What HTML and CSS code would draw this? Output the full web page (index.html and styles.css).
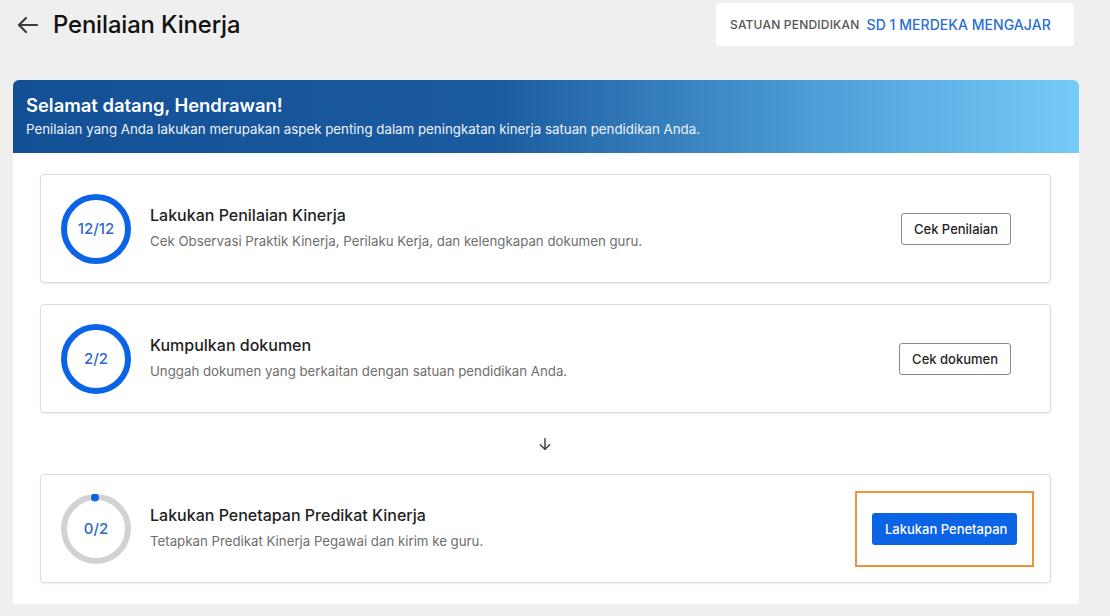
FILE: index.html
```html
<!DOCTYPE html>
<html lang="id">
<head>
  <meta charset="UTF-8">
  <meta name="viewport" content="width=device-width, initial-scale=1.0">
  <title>Penilaian Kinerja</title>
  <link rel="stylesheet" href="styles.css">
</head>
<body>
  <header class="topbar">
    <div class="page-title">
      <svg class="back-icon" width="24" height="24" viewBox="0 0 24 24" fill="none" stroke="#3c3c3c" stroke-width="2.2" stroke-linecap="round" stroke-linejoin="round">
        <path d="M21 12H3"/>
        <path d="M10 5l-7 7 7 7"/>
      </svg>
      <h1>Penilaian Kinerja</h1>
    </div>
    <div class="school-box">
      <span class="school-label">SATUAN PENDIDIKAN</span>
      <span class="school-name">SD 1 MERDEKA MENGAJAR</span>
    </div>
  </header>

  <main class="panel">
    <div class="banner">
      <h2>Selamat datang, Hendrawan!</h2>
      <p>Penilaian yang Anda lakukan merupakan aspek penting dalam peningkatan kinerja satuan pendidikan Anda.</p>
    </div>

    <div class="steps">
      <div class="step-card">
        <div class="progress">
          <svg width="70" height="70" viewBox="0 0 70 70">
            <circle cx="35" cy="35" r="32" fill="none" stroke="#0b63e5" stroke-width="6"/>
          </svg>
          <span class="progress-text">12/12</span>
        </div>
        <div class="step-info">
          <h3>Lakukan Penilaian Kinerja</h3>
          <p>Cek Observasi Praktik Kinerja, Perilaku Kerja, dan kelengkapan dokumen guru.</p>
        </div>
        <button class="btn btn-outline">Cek Penilaian</button>
      </div>

      <div class="step-card">
        <div class="progress">
          <svg width="70" height="70" viewBox="0 0 70 70">
            <circle cx="35" cy="35" r="32" fill="none" stroke="#0b63e5" stroke-width="6"/>
          </svg>
          <span class="progress-text">2/2</span>
        </div>
        <div class="step-info">
          <h3>Kumpulkan dokumen</h3>
          <p>Unggah dokumen yang berkaitan dengan satuan pendidikan Anda.</p>
        </div>
        <button class="btn btn-outline">Cek dokumen</button>
      </div>

      <div class="step-arrow">
        <svg width="16" height="16" viewBox="0 0 24 24" fill="none" stroke="#3c3c3c" stroke-width="2.2" stroke-linecap="round" stroke-linejoin="round">
          <path d="M12 4v16"/>
          <path d="M5 13l7 7 7-7"/>
        </svg>
      </div>

      <div class="step-card step-card-last">
        <div class="progress">
          <svg width="70" height="70" viewBox="0 0 70 70">
            <circle cx="35" cy="35" r="32" fill="none" stroke="#d2d2d2" stroke-width="6"/>
            <circle cx="34" cy="3.5" r="4" fill="#0b63e5"/>
          </svg>
          <span class="progress-text">0/2</span>
        </div>
        <div class="step-info">
          <h3>Lakukan Penetapan Predikat Kinerja</h3>
          <p>Tetapkan Predikat Kinerja Pegawai dan kirim ke guru.</p>
        </div>
        <div class="highlight">
          <button class="btn btn-primary">Lakukan Penetapan</button>
        </div>
      </div>
    </div>
  </main>
</body>
</html>
```

FILE: styles.css
```css
body {
  font-family: Inter, "Noto Sans", sans-serif;
  margin: 0;
  padding: 0;
  background-color: #efefef;
  color: #1f1f1f;
}
.topbar {
  display: flex;
  justify-content: space-between;
  align-items: flex-start;
  height: 80px;
  padding: 3px 36px 0 16px;
  box-sizing: border-box;
}
.page-title {
  display: flex;
  align-items: center;
  gap: 13px;
  height: 43px;
}
.back-icon {
  display: block;
}
h1 {
  margin: 0;
  font-size: 23.8px;
  font-weight: 500;
  color: #111;
  letter-spacing: -0.1px;
}
.school-box {
  display: flex;
  align-items: center;
  gap: 7px;
  height: 43px;
  padding: 0 21px 0 14px;
  background-color: white;
  border-radius: 4px;
  width: 358px;
  box-sizing: border-box;
}
.school-label {
  font-size: 12px;
  font-weight: 500;
  color: #555;
  letter-spacing: 0.2px;
}
.school-name {
  font-size: 14px;
  font-weight: 500;
  color: #2a6fd4;
  letter-spacing: 0.05px;
}
.panel {
  margin-left: 13px;
  width: 1066px;
  background-color: white;
  border-radius: 6px 6px 0 0;
}
.banner {
  height: 73px;
  box-sizing: border-box;
  padding: 14px 13px 0;
  border-radius: 6px 6px 0 0;
  background: linear-gradient(90deg, #134f95 0%, #1b5b9f 45%, #4d9dd6 75%, #76cbf9 100%);
  color: white;
}
.banner h2 {
  margin: 0;
  font-size: 18.4px;
  font-weight: 600;
  line-height: 22px;
}
.banner p {
  margin: 4px 0 0;
  font-size: 13.3px;
  line-height: 18px;
  color: #eef4fb;
}
.steps {
  padding: 21px 28px 21px 27px;
  display: flex;
  flex-direction: column;
  gap: 21px;
}
.step-card {
  display: flex;
  align-items: center;
  height: 109px;
  box-sizing: border-box;
  padding: 0 39px 0 20px;
  border: 1px solid #dcdcdc;
  border-radius: 4px;
  box-shadow: 0 1px 2px rgba(0, 0, 0, 0.08);
}
.step-card-last {
  padding-right: 16px;
}
.progress {
  position: relative;
  width: 70px;
  height: 70px;
  flex-shrink: 0;
}
.progress svg {
  display: block;
}
.progress-text {
  position: absolute;
  inset: 0;
  display: flex;
  align-items: center;
  justify-content: center;
  font-size: 15px;
  font-weight: 500;
  color: #2d69c9;
}
.step-info {
  flex: 1;
  margin-left: 19px;
}
.step-info h3 {
  margin: 0;
  font-size: 16px;
  font-weight: 500;
  line-height: 20px;
  color: #1f1f1f;
  margin-top: -2px;
}
.step-info p {
  margin: 7px 0 0;
  font-size: 13.25px;
  line-height: 18px;
  color: #6e6e6e;
}
.btn {
  font-family: inherit;
  font-size: 13px;
  font-weight: 500;
  height: 32px;
  border-radius: 3px;
  cursor: pointer;
  white-space: nowrap;
}
.btn-outline {
  background-color: white;
  border: 1px solid #8a8a8a;
  color: #1f1f1f;
  padding: 0 12px;
}
.btn-primary {
  background-color: #0b63e5;
  border: none;
  color: white;
  padding: 0 13px;
  width: 145px;
}
.highlight {
  padding: 20px 15px;
  border: 2px solid #f0913a;
}
.step-arrow {
  display: flex;
  justify-content: center;
  height: 17px;
  margin: 0 0 0 -1px;
  padding-top: 2px;
}
```
